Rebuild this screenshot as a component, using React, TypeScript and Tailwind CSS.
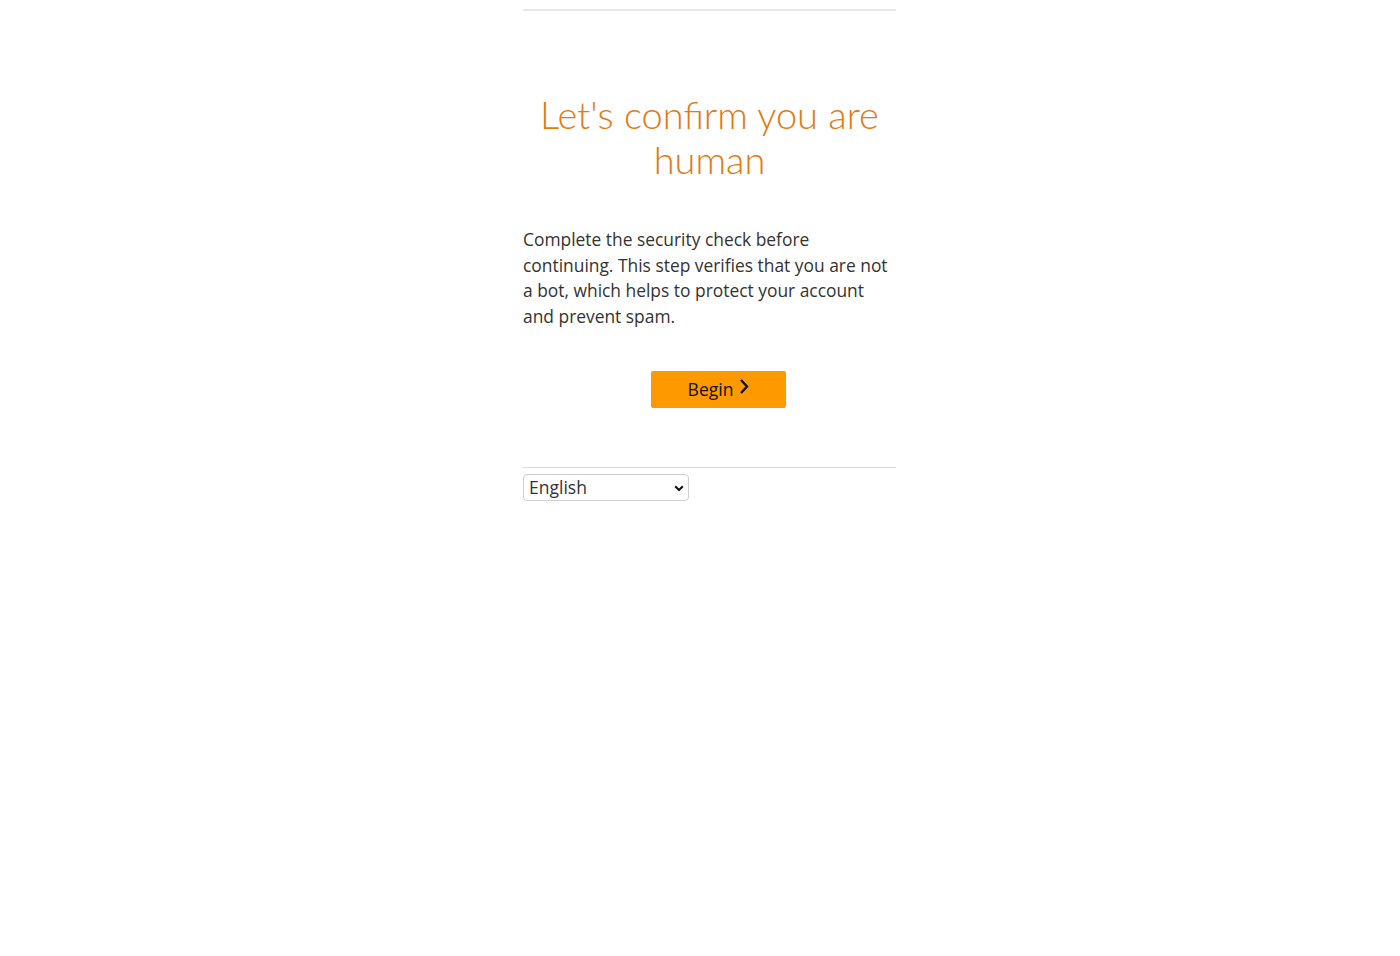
export default function App() {
  return (
    <div className="min-h-screen bg-white" style={{ fontFamily: "'Open Sans', Arial, sans-serif" }}>
      <div className="ml-[523px] w-[373px] pt-[9px]">
        <div className="border-t-2 border-[#e7e7e7]" />

        <h1
          className="mt-[81px] text-center text-[38px] font-light leading-[45px] text-[#e47911]"
          style={{ fontFamily: "Lato, 'Open Sans', sans-serif" }}
        >
          Let's confirm you are
          <br />
          human
        </h1>

        <p className="mt-[45px] text-[17.4px] leading-[25.7px] text-[#333]">
          Complete the security check before
          <br />
          continuing. This step verifies that you are not
          <br />
          a bot, which helps to protect your account
          <br />
          and prevent spam.
        </p>

        <div className="mt-[41px] flex justify-center pl-[18px]">
          <button className="flex h-[37px] w-[135px] items-center justify-center gap-[6px] rounded-[2px] bg-[#ff9900] text-[17.5px] font-medium text-[#111]">
            <span>Begin</span>
            <svg width="10" height="17" viewBox="0 0 10 17" className="-mt-[6px]">
              <path d="M2 2l6 6.5-6 6.5" fill="none" stroke="#111" strokeWidth="2.4" />
            </svg>
          </button>
        </div>

        <div className="mt-[59px] border-t border-[#ddd]" />

        <div className="relative mt-[6px] w-[166px]">
          <select className="h-[27px] w-full appearance-none rounded-[4px] border border-[#cfcfcf] bg-white pl-[5px] text-[17.5px] leading-[25px] text-[#333]">
            <option>English</option>
          </select>
          <svg
            width="10"
            height="7"
            viewBox="0 0 10 7"
            className="pointer-events-none absolute right-[5px] top-[11px]"
          >
            <path d="M1.2 1.2L5 5l3.8-3.8" fill="none" stroke="#111" strokeWidth="2" />
          </svg>
        </div>
      </div>
    </div>
  );
}
